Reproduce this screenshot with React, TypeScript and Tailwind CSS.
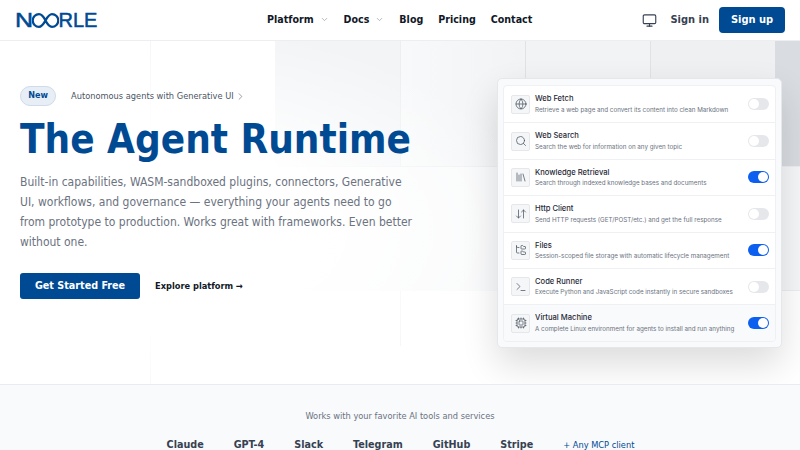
import { ChevronDown, ChevronRight, Globe, Search, Library, ArrowDownUp, FolderTree, Terminal, Cpu, Monitor } from 'lucide-react';
import type { ReactNode } from 'react';

const tools = [
  { name: 'Web Fetch', desc: 'Retrieve a web page and convert its content into clean Markdown', icon: <Globe size={12} strokeWidth={1.5} />, on: false },
  { name: 'Web Search', desc: 'Search the web for information on any given topic', icon: <Search size={12} strokeWidth={1.5} />, on: false },
  { name: 'Knowledge Retrieval', desc: 'Search through indexed knowledge bases and documents', icon: <Library size={12} strokeWidth={1.5} />, on: true },
  { name: 'Http Client', desc: 'Send HTTP requests (GET/POST/etc.) and get the full response', icon: <ArrowDownUp size={12} strokeWidth={1.5} />, on: false },
  { name: 'Files', desc: 'Session-scoped file storage with automatic lifecycle management', icon: <FolderTree size={12} strokeWidth={1.5} />, on: true },
  { name: 'Code Runner', desc: 'Execute Python and JavaScript code instantly in secure sandboxes', icon: <Terminal size={12} strokeWidth={1.5} />, on: false },
  { name: 'Virtual Machine', desc: 'A complete Linux environment for agents to install and run anything', icon: <Cpu size={12} strokeWidth={1.5} />, on: true },
];

const logos = ['Claude', 'GPT-4', 'Slack', 'Telegram', 'GitHub', 'Stripe'];

function NavLink({ children, caret }: { children: ReactNode; caret?: boolean }) {
  return (
    <a className="flex items-center text-[10.6px] font-bold text-[#111827]">
      {children}
      {caret && <ChevronDown size={9} className="ml-[6px] text-[#9ca3af]" />}
    </a>
  );
}

function Toggle({ on }: { on: boolean }) {
  return (
    <div className={`flex h-[12px] w-[21px] shrink-0 items-center rounded-full px-[1px] ${on ? 'justify-end bg-[#0d5ff0]' : 'justify-start bg-[#e5e7eb]'}`}>
      <div className="h-[10px] w-[10px] rounded-full bg-white" />
    </div>
  );
}

export default function App() {
  return (
    <div className="h-[450px] overflow-hidden bg-white font-['DejaVu_Sans_Condensed','DejaVu_Sans',sans-serif]">
      {/* Header */}
      <header className="relative z-10 flex h-[41px] items-center border-b border-[#eceef1] bg-white pl-[15px] pr-[15px]">
        <div className="flex w-[252px] items-center text-[#004a93]">
          <span className="flex items-center font-['Liberation_Sans',sans-serif] text-[20px] leading-none [-webkit-text-stroke:0.5px_#004a93]">
            <span className="mr-[3px] inline-block origin-left scale-x-[1.25]">N</span>
            <svg width="27" height="15" viewBox="0 0 27 15" fill="none" stroke="currentColor" strokeWidth="2.3">
              <path d="M13.5 7.5 C11.5 3.5 9.5 1.2 7 1.2 a6.3 6.3 0 0 0 0 12.6 C10 13.8 11.5 11 13.5 7.5 C15.5 4 17 1.2 20 1.2 a6.3 6.3 0 0 1 0 12.6 C17.5 13.8 15.5 11.5 13.5 7.5Z" />
            </svg>
            <span className="-ml-[1px]">RLE</span>
          </span>
        </div>
        <nav className="flex items-center gap-[15px]">
          <NavLink caret>Platform</NavLink>
          <NavLink caret>Docs</NavLink>
          <NavLink>Blog</NavLink>
          <NavLink>Pricing</NavLink>
          <NavLink>Contact</NavLink>
        </nav>
        <div className="ml-auto flex items-center">
          <Monitor size={15} strokeWidth={1.8} className="mr-[13px] text-[#374151]" />
          <a className="mr-[10px] text-[11px] font-bold text-[#374151]">Sign in</a>
          <button className="h-[26px] w-[66px] rounded-[4px] bg-[#004a93] text-[11px] font-bold text-white">Sign up</button>
        </div>
      </header>

      {/* Hero */}
      <section className="relative h-[344px] overflow-hidden border-b border-[#e8ebef] bg-white">
        {/* decorative grid */}
        <div className="absolute left-[275px] top-0 h-[125px] w-[125px] bg-[#f2f4f6]" />
        <div className="absolute left-[400px] top-0 h-[125px] w-[125px] border-l border-[#eceef1] bg-gradient-to-r from-[#f8f9fa] to-[#f1f3f5]" />
        <div className="absolute left-[525px] top-0 h-[125px] w-[125px] border-l border-[#dfe2e6] bg-[#f1f3f5]" />
        <div className="absolute left-[650px] top-0 h-[125px] w-[125px] border-l border-[#dfe2e6] bg-[#eef0f2]" />
        <div className="absolute left-[775px] top-0 h-[125px] w-[25px] bg-[#d9dce1]" />
        <div className="absolute left-[775px] top-[125px] h-[125px] w-[25px] border-y border-[#eceef1] bg-[#f6f7f8]" />
        <div className="absolute left-[150px] top-0 h-[344px] w-px bg-[#f3f4f6]" />
        <div className="absolute left-[400px] top-[125px] h-[180px] w-px bg-[#f3f4f6]" />
        <div className="absolute left-[275px] top-[125px] h-[125px] w-[125px] border-t border-[#eceef1] bg-[#fafbfb]" />
        <div className="absolute left-[400px] top-[125px] h-[125px] w-[125px] border-t border-[#eceef1] bg-[#f9fafb]" />
        <div className="absolute inset-0 bg-[radial-gradient(ellipse_420px_210px_at_130px_190px,#ffffff_45%,transparent_100%)]" />

        <div className="relative flex pl-[20px]">
          <div className="w-[400px] pt-[45px]">
            <div className="flex items-center">
              <span className="flex h-[20px] w-[36px] items-center justify-center rounded-full border border-[#cfdbe9] bg-[#e8eef6] text-[9px] font-bold text-[#004a93]">New</span>
              <span className="ml-[15px] text-[9.2px] text-[#4b5563]">Autonomous agents with Generative UI</span>
              <ChevronRight size={11} strokeWidth={1.5} className="ml-[1px] text-[#6b7280]" />
            </div>
            <h1 className="mt-[8px] whitespace-nowrap text-[40px] font-bold leading-[50px] text-[#004a93]">The Agent Runtime</h1>
            <p className="mt-[8px] w-[395px] text-[12px] leading-[20px] text-[#6b7280]">
              Built-in capabilities, WASM-sandboxed plugins, connectors, Generative UI, workflows, and governance — everything your agents need to go from prototype to production. Works great with frameworks. Even better without one.
            </p>
            <div className="mt-[21px] flex items-center">
              <button className="h-[26px] w-[120px] rounded-[3px] bg-[#004a93] text-[10.7px] font-bold text-white">Get Started Free</button>
              <a className="ml-[15px] text-[9.2px] font-bold text-[#111827]">Explore platform →</a>
            </div>
          </div>

          {/* Tools card */}
          <div className="absolute left-[497px] top-[37px] w-[285px] rounded-[5px] border border-[#e5e7eb] bg-[#f8fafc] px-[5px] pb-[5px] pt-[6px] shadow-[0_16px_36px_rgba(0,0,0,0.14)]">
            <div className="overflow-hidden rounded-[4px] border border-[#eef0f3] bg-white font-['Inter',sans-serif]">
              {tools.map((t, i) => (
                <div key={t.name} className={`flex h-[36.4px] items-center pl-[7px] pr-[6px] ${i > 0 ? 'border-t border-[#eef0f3]' : ''} ${i === 6 ? 'bg-[#f9fafb]' : ''}`}>
                  <div className="flex h-[19px] w-[19px] shrink-0 items-center justify-center rounded-[2px] border border-[#e5e7eb] bg-[#f5f6f8] text-[#4b5563]">{t.icon}</div>
                  <div className="ml-[5px] min-w-0 flex-1 pt-[1px]">
                    <div className="text-[7.6px] font-medium leading-[11px] text-[#1f2937]">{t.name}</div>
                    <div className="mt-[0.5px] whitespace-nowrap text-[6.25px] leading-[11px] text-[#6b7280]">{t.desc}</div>
                  </div>
                  <Toggle on={t.on} />
                </div>
              ))}
            </div>
          </div>
        </div>
      </section>

      {/* Integrations */}
      <section className="bg-[#f8fafc] pt-[24px] text-center">
        <p className="text-[9.2px] leading-[14px] text-[#6b7280]">Works with your favorite AI tools and services</p>
        <div className="mt-[14px] flex items-center justify-center gap-[30px] pl-[1px]">
          {logos.map((l) => (
            <span key={l} className="text-[10.7px] font-bold text-[#374151]">{l}</span>
          ))}
          <span className="text-[9.2px] text-[#004a93]">+ Any MCP client</span>
        </div>
      </section>
    </div>
  );
}
